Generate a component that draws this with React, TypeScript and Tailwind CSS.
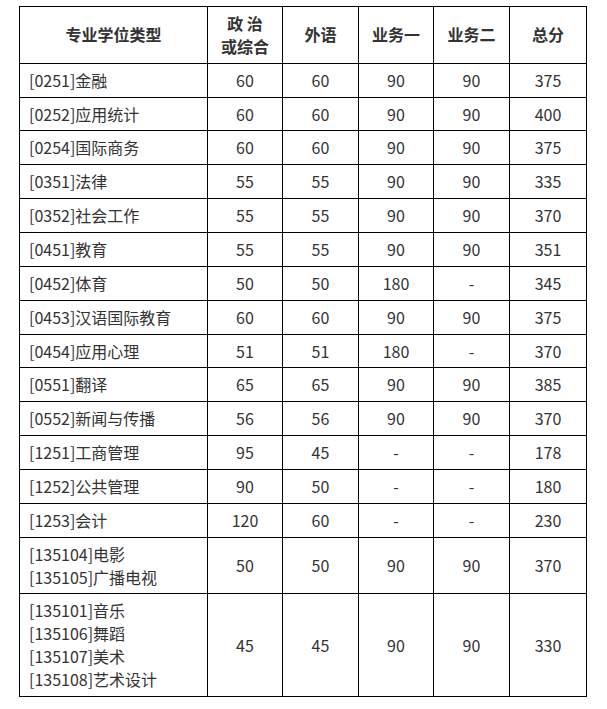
import React from "react";

const rows: [string[], string, string, string, string, string][] = [
  [["[0251]金融"], "60", "60", "90", "90", "375"],
  [["[0252]应用统计"], "60", "60", "90", "90", "400"],
  [["[0254]国际商务"], "60", "60", "90", "90", "375"],
  [["[0351]法律"], "55", "55", "90", "90", "335"],
  [["[0352]社会工作"], "55", "55", "90", "90", "370"],
  [["[0451]教育"], "55", "55", "90", "90", "351"],
  [["[0452]体育"], "50", "50", "180", "-", "345"],
  [["[0453]汉语国际教育"], "60", "60", "90", "90", "375"],
  [["[0454]应用心理"], "51", "51", "180", "-", "370"],
  [["[0551]翻译"], "65", "65", "90", "90", "385"],
  [["[0552]新闻与传播"], "56", "56", "90", "90", "370"],
  [["[1251]工商管理"], "95", "45", "-", "-", "178"],
  [["[1252]公共管理"], "90", "50", "-", "-", "180"],
  [["[1253]会计"], "120", "60", "-", "-", "230"],
  [["[135104]电影", "[135105]广播电视"], "50", "50", "90", "90", "370"],
  [["[135101]音乐", "[135106]舞蹈", "[135107]美术", "[135108]艺术设计"], "45", "45", "90", "90", "330"],
];

export default function App() {
  const cell = "border border-black py-[5px] leading-[22.86px] text-center align-middle";
  return (
    <div
      className="bg-white w-[607px] h-[709px] pt-[6px] pl-[19px] text-[#333] text-[16px]"
      style={{ fontFamily: '"Noto Sans CJK SC", "Noto Sans", sans-serif' }}
    >
      <table className="table-fixed border-collapse w-[567px]">
        <colgroup>
          <col className="w-[188px]" />
          <col className="w-[75px]" />
          <col className="w-[76px]" />
          <col className="w-[75px]" />
          <col className="w-[76px]" />
          <col className="w-[77px]" />
        </colgroup>
        <thead>
          <tr className="font-bold">
            <th className={cell}>专业学位类型</th>
            <th className={cell}>
              <div>政 治</div>
              <div>或综合</div>
            </th>
            <th className={cell}>外语</th>
            <th className={cell}>业务一</th>
            <th className={cell}>业务二</th>
            <th className={cell}>总分</th>
          </tr>
        </thead>
        <tbody>
          {rows.map((r, i) => (
            <tr key={i}>
              <td className="border border-black py-[5px] pl-[9px] leading-[22.86px] text-left align-middle">
                {r[0].map((l, j) => (
                  <div key={j}>{l}</div>
                ))}
              </td>
              <td className={cell}>{r[1]}</td>
              <td className={cell}>{r[2]}</td>
              <td className={cell}>{r[3]}</td>
              <td className={cell}>{r[4]}</td>
              <td className={cell}>{r[5]}</td>
            </tr>
          ))}
        </tbody>
      </table>
    </div>
  );
}
